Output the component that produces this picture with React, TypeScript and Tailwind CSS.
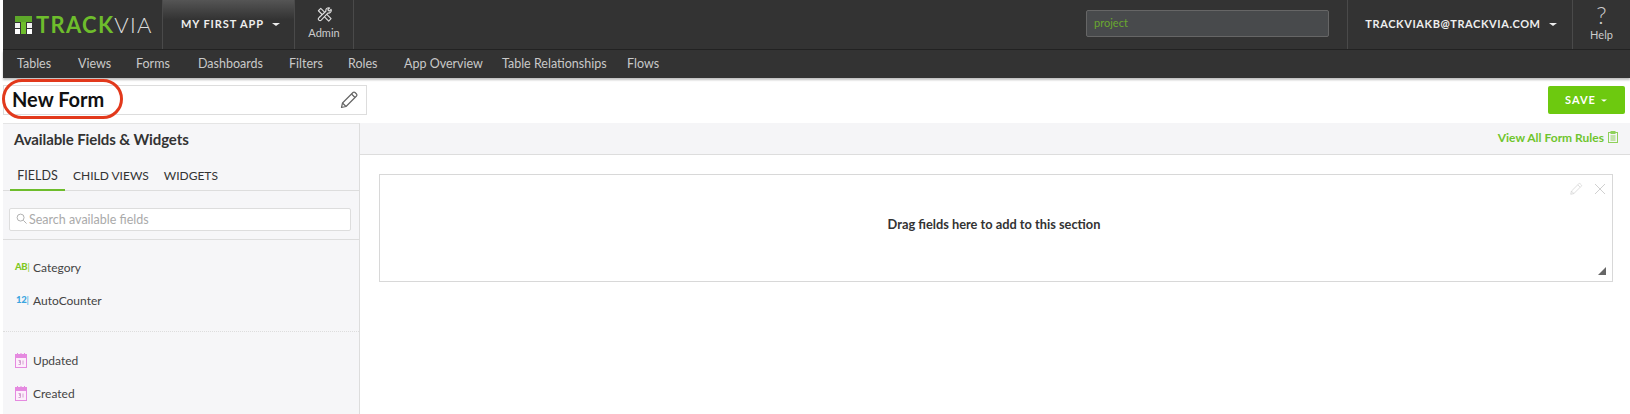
import React from "react";

const Caret = ({ className = "" }: { className?: string }) => (
  <span className={`inline-block w-0 h-0 border-x-[4px] border-x-transparent border-t-[3px] border-t-current ${className}`} />
);

const Pencil = ({ className = "", sw = 1.2 }: { className?: string; sw?: number }) => (
  <svg viewBox="0 0 20 20" fill="none" stroke="currentColor" strokeWidth={sw} strokeLinejoin="round" className={className}>
    <path d="M2.500 17.500l1-4.500L14 2.500a1.400 1.400 0 0 1 2 0l1.500 1.500a1.400 1.400 0 0 1 0 2L7 16.500z" />
    <path d="M3.500 13L7 16.500M12.500 4L16 7.500" />
  </svg>
);

const Calendar = () => (
  <svg viewBox="0 0 12 15" className="w-[12px] h-[15px]" fill="none">
    <rect x="0.500" y="1.500" width="11" height="13" stroke="#e58ae0" strokeWidth="1" fill="#fdeefb" />
    <rect x="0.500" y="2" width="11" height="3" fill="#e58ae0" />
    <path d="M2.500 0v2.500M6 0v2.500M9.500 0v2.500" stroke="#e58ae0" strokeWidth="1" />
    <path d="M3.500 7.500h2v1.500h-1.500h1.500v2.500h-2M8 7.500v4" stroke="#c98fc6" strokeWidth="0.800" />
  </svg>
);

const navItems: [string, string][] = [
  ["Tables", "w-[61px]"],
  ["Views", "w-[58px]"],
  ["Forms", "w-[62px]"],
  ["Dashboards", "w-[91px]"],
  ["Filters", "w-[59px]"],
  ["Roles", "w-[56px]"],
  ["App Overview", "w-[98px]"],
  ["Table Relationships", "w-[125px]"],
  ["Flows", ""],
];

const FieldRow = ({ icon, label }: { icon: React.ReactNode; label: string }) => (
  <div className="flex items-center h-[33px] pl-[12px] text-[12px] text-[#444]">
    <span className="w-[18px] flex items-center">{icon}</span>
    <span>{label}</span>
  </div>
);

export default function App() {
  return (
    <div className="w-[1630px] h-[414px] overflow-hidden bg-white relative pl-[3px]" style={{ fontFamily: "Lato, 'Open Sans', sans-serif" }}>
      {/* top bar */}
      <header className="h-[50px] bg-[#333333] border-b border-b-[#222] flex items-stretch text-white">
        <div className="w-[160px] flex items-center pl-[12px] shrink-0 border-r border-r-[#4a4a4a]">
          <svg viewBox="0 0 17 18" className="w-[17px] h-[18px] shrink-0 mr-[4px]">
            <rect x="0" y="0" width="17" height="6" fill="#5ea82a" />
            <rect x="0" y="7" width="5" height="5" fill="#f2f2f2" />
            <rect x="6" y="6" width="5" height="12" fill="#6ebd2c" />
            <rect x="12" y="7" width="5" height="5" fill="#f2f2f2" />
            <rect x="0" y="13" width="5" height="5" fill="#ffffff" />
            <rect x="12" y="13" width="5" height="5" fill="#ffffff" />
          </svg>
          <span className="text-[22px] leading-none tracking-[1.3px] font-bold text-[#6ebd2c]">TRACK</span>
          <span className="text-[22px] leading-none tracking-[1.3px] font-light text-[#ddd]">VIA</span>
        </div>
        <div className="w-[132px] shrink-0 flex items-center justify-center gap-[8px] border-r border-r-[#4a4a4a] bg-gradient-to-b from-[#555] to-[#333] to-40% text-[11px] font-bold tracking-[0.9px] text-[#eee] pl-[4px]">
          MY FIRST APP <Caret />
        </div>
        <div className="w-[59px] shrink-0 flex flex-col items-center justify-center border-r border-r-[#4a4a4a] text-[#ccc]">
          <svg viewBox="0 0 16 16" className="w-[15px] h-[15px]" fill="none" stroke="#ddd" strokeWidth="1.200" strokeLinejoin="round">
            <path d="M1.500 4L4 1.500l11 11-2.500 2.500z" />
            <path d="M9.500 4.500a3 3 0 0 1 4-3.500L11.500 3l1.500 1.500 2-2a3 3 0 0 1-3.500 4L4.500 14a1.500 1.500 0 0 1-2.500-2.500z" fill="#333" />
          </svg>
          <span className="text-[11px] mt-[3px]">Admin</span>
        </div>
        <div className="flex-1 flex items-center justify-end pr-[18px]">
          <div className="w-[243px] h-[27px] mb-[3px] bg-[#484a4c] border border-[#666] rounded-[2px] flex items-center pl-[7px] text-[11px] text-[#6aa82f]">project</div>
        </div>
        <div className="w-[226px] shrink-0 flex items-center justify-center gap-[8px] border-x border-x-[#4a4a4a] text-[11px] font-bold tracking-[0.6px] text-[#eee] pl-[2px]">
          TRACKVIAKB@TRACKVIA.COM <Caret />
        </div>
        <div className="w-[57px] shrink-0 flex flex-col items-center justify-center text-[#ccc]">
          <span className="text-[24px] leading-[20px] font-light">?</span>
          <span className="text-[11px] mt-[2px]">Help</span>
        </div>
      </header>
      {/* nav */}
      <nav className="h-[28px] bg-[#333333] flex items-center shadow-[0_2px_2px_rgba(0,0,0,0.25)] text-[12.5px] text-[#c9c9c9] relative pl-[14px]">
        {navItems.map(([n, w]) => (
          <span key={n} className={w}>{n}</span>
        ))}
      </nav>
      {/* title row */}
      <div className="h-[45px] flex items-center justify-between pr-[3px]">
        <div className="w-[364px] h-[30px] border border-[#ddd] flex items-center justify-between pl-[8px] pr-[7px] mt-[-1px]">
          <span className="text-[20px] font-bold text-[#111] mt-[-3px]">New Form</span>
          <Pencil className="w-[20px] h-[20px] text-[#666]" />
        </div>
        <button className="w-[77px] h-[28px] mt-[-1px] bg-[#6dc90f] rounded-[2px] text-white text-[11px] font-bold tracking-[1px] flex items-center justify-center gap-[4px] mr-[2px]">
          SAVE <Caret className="scale-75" />
        </button>
      </div>
      {/* body */}
      <div className="flex h-[291px]">
        <aside className="w-[357px] shrink-0 bg-[#f6f6f8] border-t border-t-[#e5e5e5] border-r border-r-[#ddd]">
          <div className="h-[31px] pl-[11px] flex items-center text-[15px] tracking-[-0.1px] font-bold text-[#333]">Available Fields &amp; Widgets</div>
          <div className="h-[36px] flex items-stretch border-b border-b-[#ddd] pl-[7px] text-[12px] text-[#333]">
            <span className="w-[55px] flex items-center justify-center border-b-2 border-b-[#6ebd2c] text-[12.5px] pt-[8px] mb-[-1px]">FIELDS</span>
            <span className="ml-[8px] flex items-center pt-[6px]">CHILD VIEWS</span>
            <span className="ml-[15px] flex items-center pt-[6px]">WIDGETS</span>
          </div>
          <div className="h-[49px] pt-[17px] pl-[6px] border-b border-b-[#ddd]">
            <div className="w-[342px] h-[23px] bg-white border border-[#ddd] rounded-[2px] flex items-center pl-[6px] pt-[1px] text-[12.5px] text-[#aaa]">
              <svg viewBox="0 0 12 12" className="w-[11px] h-[11px] mr-[2px] mt-[-3px]" fill="none" stroke="#aaa" strokeWidth="1">
                <circle cx="5" cy="5" r="3.800" />
                <path d="M8 8l3.500 3.500" />
              </svg>
              Search available fields
            </div>
          </div>
          <div className="h-[92px] pt-[11px] border-b border-dotted border-b-[#ddd]">
            <FieldRow
              label="Category"
              icon={<span className="text-[9.5px] font-black text-[#7ec81e] tracking-[-0.3px]">AB<span className="font-normal">|</span></span>}
            />
            <FieldRow
              label="AutoCounter"
              icon={<span className="text-[9.5px] font-black text-[#3ba5e0] tracking-[-0.3px] pl-[1px]">12<span className="font-normal">|</span></span>}
            />
          </div>
          <div className="pt-[12px]">
            <FieldRow label="Updated" icon={<Calendar />} />
            <FieldRow label="Created" icon={<Calendar />} />
          </div>
        </aside>
        <main className="flex-1 min-w-0">
          <div className="h-[32px] bg-[#f5f5f7] border-b border-b-[#ddd] flex items-center justify-end pr-[12px] gap-[4px] text-[12px] font-bold text-[#6fc52d] pb-[1px]">
            View All Form Rules
            <svg viewBox="0 0 10 12" className="w-[10px] h-[12px] mt-[-2px]" fill="none" stroke="#8fd15a" strokeWidth="1">
              <rect x="0.500" y="1.500" width="9" height="10" />
              <rect x="3" y="0.500" width="4" height="2" fill="#8fd15a" />
              <path d="M2.500 5h5M2.500 7h5M2.500 9h5" />
            </svg>
          </div>
          <div className="pl-[19px] pr-[17px] pt-[19px]">
            <div className="h-[108px] border border-[#d8d8d8] relative flex items-center justify-center text-[12.8px] font-bold text-[#333] pb-[7px] pr-[4px]">
              Drag fields here to add to this section
              <div className="absolute top-[7px] right-[6px] flex items-center gap-[11px] text-[#d0d0d0]">
                <Pencil className="w-[14px] h-[14px]" sw={1} />
                <svg viewBox="0 0 12 12" className="w-[12px] h-[12px]" fill="none" stroke="currentColor" strokeWidth="1">
                  <path d="M1 1l10 10M11 1L1 11" />
                </svg>
              </div>
              <svg viewBox="0 0 8 8" className="absolute bottom-[6px] right-[6px] w-[8px] h-[8px]">
                <path d="M8 0v8H0z" fill="#666" />
              </svg>
            </div>
          </div>
        </main>
      </div>
      {/* annotation */}
      <div className="absolute left-[1.5px] top-[79px] w-[121px] h-[40px] rounded-[20px] border-[3px] border-[#e2391c]" />
    </div>
  );
}
